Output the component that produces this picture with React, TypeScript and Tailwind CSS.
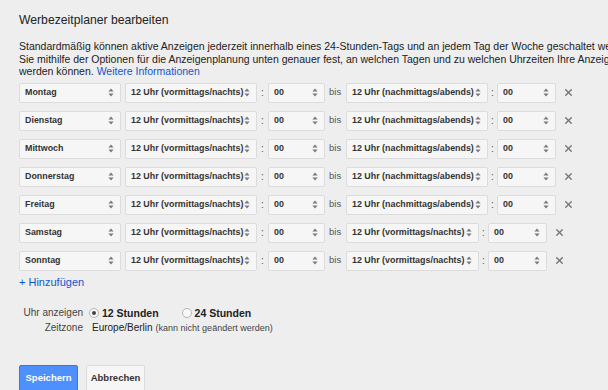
import { X } from "lucide-react";

const font = { fontFamily: '"Liberation Sans", Arial, sans-serif' };

type Row = { day: string; from: string; to: string; wide: boolean };

const rows: Row[] = [
  { day: "Montag", from: "12 Uhr (vormittags/nachts)", to: "12 Uhr (nachmittags/abends)", wide: true },
  { day: "Dienstag", from: "12 Uhr (vormittags/nachts)", to: "12 Uhr (nachmittags/abends)", wide: true },
  { day: "Mittwoch", from: "12 Uhr (vormittags/nachts)", to: "12 Uhr (nachmittags/abends)", wide: true },
  { day: "Donnerstag", from: "12 Uhr (vormittags/nachts)", to: "12 Uhr (nachmittags/abends)", wide: true },
  { day: "Freitag", from: "12 Uhr (vormittags/nachts)", to: "12 Uhr (nachmittags/abends)", wide: true },
  { day: "Samstag", from: "12 Uhr (vormittags/nachts)", to: "12 Uhr (vormittags/nachts)", wide: false },
  { day: "Sonntag", from: "12 Uhr (vormittags/nachts)", to: "12 Uhr (vormittags/nachts)", wide: false },
];

function Arrows() {
  return (
    <svg width="6" height="9" viewBox="0 0 6 9" className="shrink-0">
      <path d="M3 0.5 L5.6 3.6 H0.4 Z" fill="#7a7a7a" />
      <path d="M3 8.5 L5.6 5.4 H0.4 Z" fill="#7a7a7a" />
    </svg>
  );
}

function Select({ label, className }: { label: string; className: string }) {
  return (
    <div
      className={`flex h-[20px] shrink-0 items-center justify-between rounded-[2px] border border-[#dcdcdc] bg-[#f6f6f6] pl-[5px] pr-[6px] text-[8.9px] font-bold text-[#333] ${className}`}
    >
      <span className="whitespace-nowrap">{label}</span>
      <Arrows />
    </div>
  );
}

function Radio({ checked }: { checked: boolean }) {
  return (
    <span className="flex h-[10px] w-[10px] items-center justify-center rounded-full border border-[#b5b5b5] bg-[#f8f8f8]">
      {checked && <span className="h-[4px] w-[4px] rounded-full bg-[#444]" />}
    </span>
  );
}

export default function App() {
  return (
    <div style={font} className="h-[390px] w-[608px] overflow-hidden bg-[#eeeeee] pl-[19px] text-[#222]">
      <h1 className="pt-[12px] text-[12.2px] leading-[16px] font-normal text-[#222]">Werbezeitplaner bearbeiten</h1>

      <div className="mt-[12px] text-[10.5px] leading-[12.5px] text-[#222]">
        <div className="whitespace-nowrap">
          Standardmäßig können aktive Anzeigen jederzeit innerhalb eines 24-Stunden-Tags und an jedem Tag der Woche geschaltet werden. Legen
        </div>
        <div className="whitespace-nowrap">
          Sie mithilfe der Optionen für die Anzeigenplanung unten genauer fest, an welchen Tagen und zu welchen Uhrzeiten Ihre Anzeigen geschaltet
        </div>
        <div className="whitespace-nowrap">
          werden können. <span className="text-[#1155cc]">Weitere Informationen</span>
        </div>
      </div>

      <div className="mt-[5px] flex flex-col gap-[8px]">
        {rows.map((r) => (
          <div key={r.day} className="flex h-[20px] items-center">
            <Select label={r.day} className="w-[102px]" />
            <Select label={r.from} className="ml-[4px] w-[132px]" />
            <span className="w-[11px] text-center text-[10px] text-[#555]">:</span>
            <Select label="00" className="w-[57px]" />
            <span className="w-[21px] pl-[4px] text-[9.5px] text-[#555]">bis</span>
            <Select label={r.to} className={r.wide ? "w-[142px]" : "w-[133px]"} />
            <span className="w-[9px] text-center text-[10px] text-[#555]">:</span>
            <Select label="00" className="w-[59px]" />
            <X size={11} strokeWidth={3} className="ml-[7px] text-[#777]" />
          </div>
        ))}
      </div>

      <div className="mt-[4px] text-[11px] leading-[14px] text-[#1155cc]">+ Hinzufügen</div>

      <div className="mt-[17px] flex items-center text-[10px] leading-[14px]">
        <span className="w-[64px] whitespace-nowrap text-right text-[#444]">Uhr anzeigen</span>
        <span className="ml-[6px]">
          <Radio checked />
        </span>
        <span className="ml-[3px] whitespace-nowrap text-[10.5px] font-bold text-[#222]">12 Stunden</span>
        <span className="ml-[23px]">
          <Radio checked={false} />
        </span>
        <span className="ml-[3px] whitespace-nowrap text-[10.5px] font-bold text-[#222]">24 Stunden</span>
      </div>
      <div className="mt-[1px] flex items-baseline text-[10px] leading-[14px]">
        <span className="w-[64px] whitespace-nowrap text-right text-[#444]">Zeitzone</span>
        <span className="ml-[9px] whitespace-nowrap text-[#222]">Europe/Berlin</span>
        <span className="ml-[3px] whitespace-nowrap text-[9px] text-[#444]">(kann nicht geändert werden)</span>
      </div>

      <div className="mt-[30px] flex gap-[8px]">
        <button className="h-[28px] w-[59px] rounded-[2px] border border-[#3079ed] bg-[#4d90fe] text-[9.5px] font-bold text-white">
          Speichern
        </button>
        <button className="h-[28px] w-[59px] rounded-[2px] border border-[#dcdcdc] bg-[#f6f6f6] text-[9.5px] font-bold text-[#333]">
          Abbrechen
        </button>
      </div>
    </div>
  );
}
